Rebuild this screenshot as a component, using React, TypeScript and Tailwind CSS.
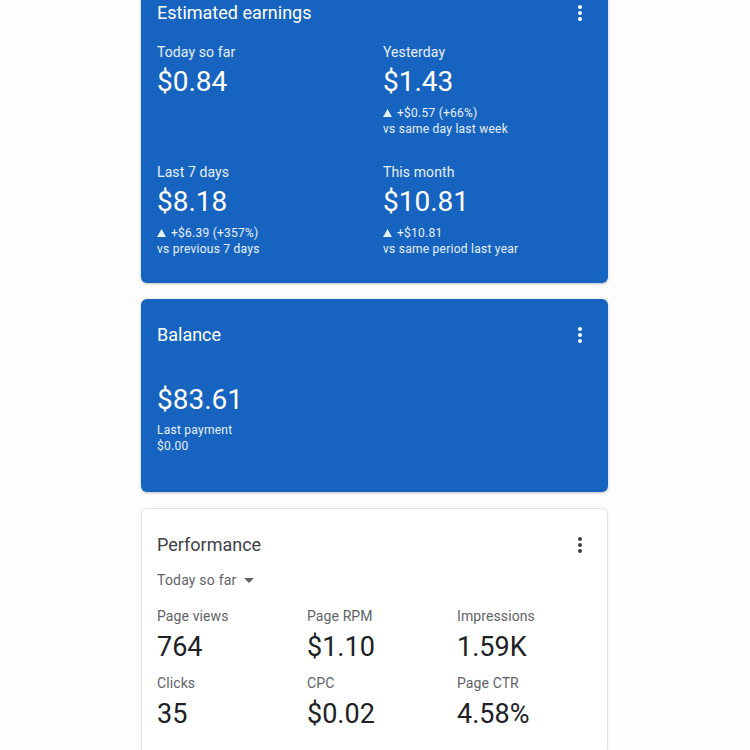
import React from "react";

const font = { fontFamily: 'Roboto, "Noto Sans", Arial, sans-serif' };

function Kebab({ color }: { color: string }) {
  return (
    <svg width="24" height="24" viewBox="0 0 24 24" fill={color} aria-hidden>
      <circle cx="12" cy="6" r="2" />
      <circle cx="12" cy="12" r="2" />
      <circle cx="12" cy="18" r="2" />
    </svg>
  );
}

type Stat = { label: string; value: string; change?: string; compare?: string };

function EarningStat({ s }: { s: Stat }) {
  return (
    <div className="flex flex-col">
      <div className="h-5 text-[14px] leading-[20px] text-white/90 tracking-[0.1px]">{s.label}</div>
      <div className="mt-[2px] h-9 text-[28px] leading-[36px] text-white">{s.value}</div>
      {s.change && (
        <div className="mt-[5px] text-[12px] leading-[16px] text-white/90 tracking-[0.25px]">
          <div className="h-4 flex items-center">
            <svg width="9" height="8" viewBox="0 0 9 8" fill="currentColor" className="mr-[5px]" aria-hidden>
              <polygon points="4.5,0 9,8 0,8" />
            </svg>
            <span>{s.change}</span>
          </div>
          <div className="h-4">{s.compare}</div>
        </div>
      )}
    </div>
  );
}

const earnings: Stat[] = [
  { label: "Today so far", value: "$0.84" },
  { label: "Yesterday", value: "$1.43", change: "+$0.57 (+66%)", compare: "vs same day last week" },
  { label: "Last 7 days", value: "$8.18", change: "+$6.39 (+357%)", compare: "vs previous 7 days" },
  { label: "This month", value: "$10.81", change: "+$10.81", compare: "vs same period last year" },
];

const perf = [
  { label: "Page views", value: "764" },
  { label: "Page RPM", value: "$1.10" },
  { label: "Impressions", value: "1.59K" },
  { label: "Clicks", value: "35" },
  { label: "CPC", value: "$0.02" },
  { label: "Page CTR", value: "4.58%" },
];

export default function App() {
  return (
    <div className="w-[750px] h-[750px] overflow-hidden bg-[#fdfdfd]" style={font}>
      <div className="w-[467px] ml-[141px] flex flex-col gap-4">
        {/* Estimated earnings */}
        <section className="-mt-[15px] h-[298px] bg-[#1664c0] rounded-md shadow-[0_1px_3px_rgba(0,0,0,0.25)] pt-4 px-4">
          <div className="flex items-center justify-between h-6">
            <h2 className="text-[18px] leading-[24px] text-white">Estimated earnings</h2>
            <Kebab color="#ffffff" />
          </div>
          <div className="mt-[17px] grid grid-cols-[226px_1fr] gap-y-[25px]">
            {earnings.map((s) => (
              <EarningStat key={s.label} s={s} />
            ))}
          </div>
        </section>

        {/* Balance */}
        <section className="h-[193px] bg-[#1664c0] rounded-md shadow-[0_1px_3px_rgba(0,0,0,0.25)] pt-6 px-4">
          <div className="flex items-center justify-between h-6">
            <h2 className="text-[18px] leading-[24px] text-white">Balance</h2>
            <Kebab color="#ffffff" />
          </div>
          <div className="mt-[35px] h-9 text-[28px] leading-[36px] text-white">$83.61</div>
          <div className="mt-[4px] text-[12px] leading-[16px] text-white/90 tracking-[0.25px]">
            <div>Last payment</div>
            <div>$0.00</div>
          </div>
        </section>

        {/* Performance */}
        <section className="bg-white rounded-md border border-[#e3e3e3] shadow-[0_1px_2px_rgba(0,0,0,0.08)] pt-6 pb-6 px-[15px]">
          <div className="flex items-center justify-between h-6">
            <h2 className="text-[18px] leading-[24px] text-[#3c4043]">Performance</h2>
            <Kebab color="#3c4043" />
          </div>
          <div className="mt-[13px] h-5 flex items-center gap-[8px] text-[14px] leading-[20px] text-[#5f6368] tracking-[0.2px]">
            <span>Today so far</span>
            <svg width="10" height="5" viewBox="0 0 10 5" fill="#5f6368" aria-hidden>
              <polygon points="0,0 10,0 5,5" />
            </svg>
          </div>
          <div className="mt-[16px] grid grid-cols-[150px_150px_1fr] gap-y-[10px]">
            {perf.map((p) => (
              <div key={p.label} className="flex flex-col">
                <div className="h-5 text-[14px] leading-[20px] text-[#5f6368] tracking-[0.1px]">{p.label}</div>
                <div className="mt-[5px] h-8 text-[27px] leading-[32px] text-[#202124]">{p.value}</div>
              </div>
            ))}
          </div>
        </section>
      </div>
    </div>
  );
}
